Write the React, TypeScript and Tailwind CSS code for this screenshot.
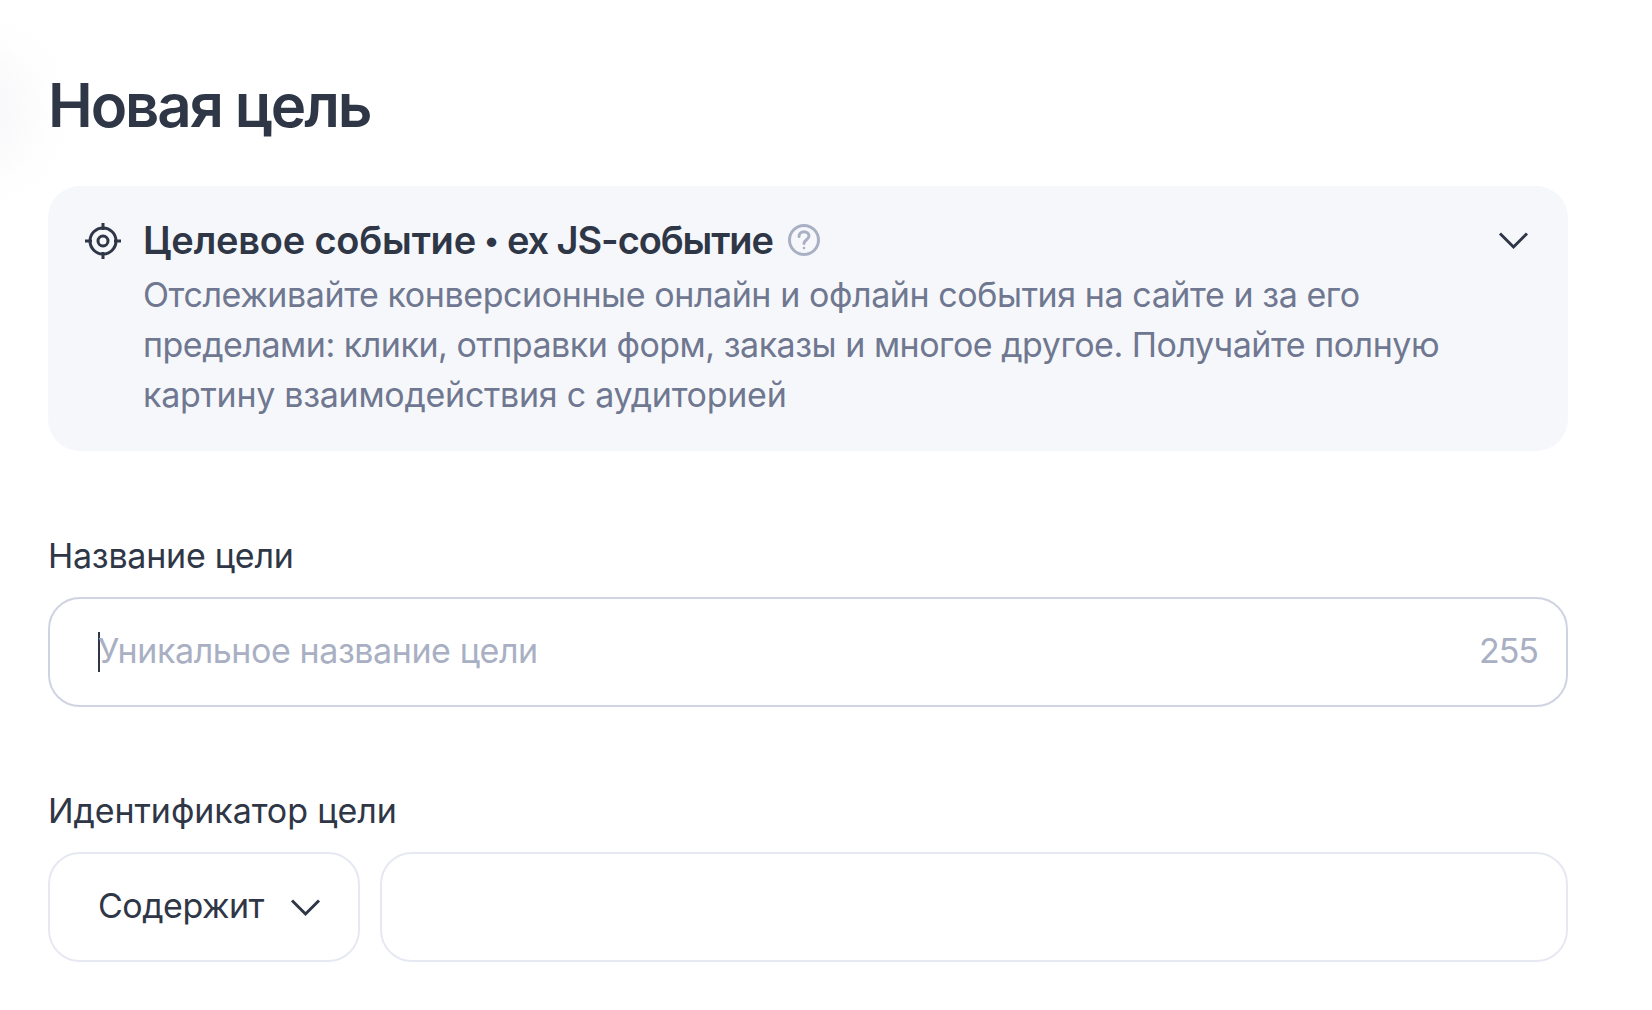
const Chevron = ({ className = "" }: { className?: string }) => (
  <svg width="31" height="19" viewBox="0 0 31 19" fill="none" stroke="#2f3747" strokeWidth="3" className={className}>
    <path d="M2 2.500 15.500 16 29 2.500" />
  </svg>
);

const TargetIcon = () => (
  <svg width="38" height="38" viewBox="0 0 38 38" fill="none" stroke="#2f3747" strokeWidth="3" className="shrink-0">
    <circle cx="19" cy="19" r="13" />
    <circle cx="19" cy="19" r="5" />
    <path d="M19 1v7M19 30v7M1 19h7M30 19h7" />
  </svg>
);

const HelpIcon = () => (
  <svg width="34" height="34" viewBox="0 0 34 34" fill="none" stroke="#a9b0c3" strokeWidth="3" className="shrink-0">
    <circle cx="17" cy="17" r="14.5" />
    <path d="M12 13.5c0-3 2.200-4.700 5-4.700s5 1.700 5 4.300c0 3.600-5 3.700-5 7.400" strokeLinecap="round" />
    <circle cx="17" cy="25" r="1.300" fill="#a9b0c3" stroke="none" />
  </svg>
);

const App = () => {
  return (
    <div className="relative w-[1652px] h-[1010px] bg-white overflow-hidden pl-[48px] pr-[84px] pt-[67px] font-['Inter','Noto_Sans',sans-serif] text-[#2f3747]">
      <div className="absolute left-[-70px] top-[50px] w-[100px] h-[120px] rounded-full bg-[#f8f8fa] blur-xl" />
      <h1 className="relative text-[60px] leading-[76px] font-semibold tracking-[-2.1px]">Новая цель</h1>

      <div className="mt-[43px] h-[265px] rounded-[32px] bg-[#f6f7fb] pl-[36px] pr-[39px] pt-[32px] flex gap-[21px]">
        <div className="pt-[4px]">
          <TargetIcon />
        </div>
        <div className="flex-1">
          <div className="flex items-center gap-[14px] h-[44px]">
            <span className="flex items-center text-[38px] leading-[44px] font-semibold">
              <span className="tracking-[-0.2px]">Целевое событие</span>
              <span className="w-[31px] text-center text-[30px]">•</span>
              <span className="tracking-[-1.1px]">ex JS-событие</span>
            </span>
            <HelpIcon />
            <Chevron className="ml-auto" />
          </div>
          <p className="mt-[8px] text-[34px] leading-[50px] text-[#6f7890]">
            <span className="tracking-[-0.42px]">Отслеживайте конверсионные онлайн и офлайн события на сайте и за его</span>
            <br />
            <span className="tracking-[-0.48px]">пределами: клики, отправки форм, заказы и многое другое. Получайте полную</span>
            <br />
            <span className="tracking-[-0.28px]">картину взаимодействия с аудиторией</span>
          </p>
        </div>
      </div>

      <div className="mt-[83px] text-[34px] leading-[44px] tracking-[-0.25px]">Название цели</div>
      <div className="mt-[19px] h-[110px] rounded-[32px] border-2 border-[#cfd3e2] flex items-center pl-[48px] pr-[28px]">
        <div className="w-[2px] h-[40px] mr-[-2px] bg-[#2f3747]" />
        <span className="flex-1 pb-[4px] text-[34px] text-[#a9b0c3] tracking-[-0.42px]">Уникальное название цели</span>
        <span className="pb-[4px] text-[34px] text-[#a9b0c3] tracking-[-1px]">255</span>
      </div>

      <div className="mt-[82px] text-[34px] leading-[44px] tracking-[-0.08px]">Идентификатор цели</div>
      <div className="mt-[19px] flex gap-[20px]">
        <div className="w-[312px] h-[110px] rounded-[32px] border-2 border-[#e6e9f2] flex items-center pl-[48px] gap-[26px]">
          <span className="pb-[4px] text-[34px] tracking-[-0.5px]">Содержит</span>
          <Chevron />
        </div>
        <div className="flex-1 h-[110px] rounded-[32px] border-2 border-[#e6e9f2]" />
      </div>
    </div>
  );
};

export default App;
